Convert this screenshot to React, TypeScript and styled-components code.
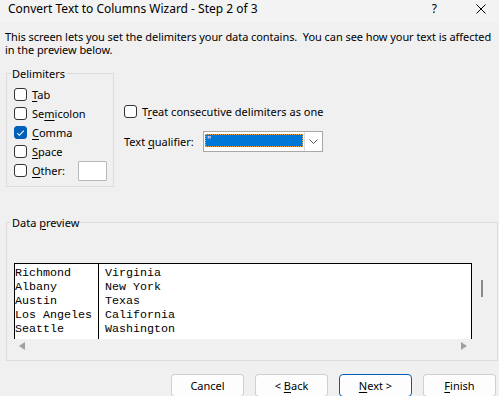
import React from "react";
import styled, { createGlobalStyle } from "styled-components";

const UI_FONT = `"Noto Sans", "Open Sans", sans-serif`;
const MONO_FONT = `"Liberation Mono", "DejaVu Sans Mono", monospace`;

const GlobalStyle = createGlobalStyle`
  html, body { margin: 0; padding: 0; background: #f0f0f0; }
  body { font-family: ${UI_FONT}; font-size: 11px; color: #000; }
  * { box-sizing: border-box; }
`;

const Window = styled.div`
  width: 499px;
  height: 396px;
  overflow: hidden;
  background: #f0f0f0;
  display: flex;
  flex-direction: column;
  font-family: ${UI_FONT};
  font-size: 11px;
  color: #000;
`;

const TitleBar = styled.div`
  height: 22px;
  flex: none;
  background: #f3f3f3;
  display: flex;
  align-items: flex-start;
  padding: 1px 0 0 8px;
`;

const Title = styled.div`
  font-size: 12px;
  line-height: 15px;
  flex: 1;
  white-space: nowrap;
`;

const HelpMark = styled.div`
  font-size: 12px;
  line-height: 15px;
  margin-right: 39px;
`;

const CloseIcon = styled.svg`
  margin: 3px 13px 0 0;
  flex: none;
`;

const Content = styled.div`
  display: flex;
  flex-direction: column;
  padding: 0 1px 0 6px;
`;

const Description = styled.p`
  margin: 8px 0 0 -1px;
  line-height: 13px;
  letter-spacing: -0.06px;
  display: flex;
  flex-direction: column;
`;

const Line = styled.span`
  white-space: pre;
  height: 13px;
`;

const TopRow = styled.div`
  display: flex;
  align-items: flex-start;
  gap: 10px;
  margin-top: 17px;
`;

const GroupBox = styled.div<{ $width?: number }>`
  border: 1px solid #dcdcdc;
  width: ${(p) => (p.$width ? `${p.$width}px` : "auto")};
  display: flex;
  flex-direction: column;
`;

const Caption = styled.div`
  width: fit-content;
  margin: -8px 0 0 4px;
  padding: 0 1px;
  background: #f0f0f0;
  line-height: 15px;
  font-size: 11px;
`;

const DelimList = styled.div`
  display: flex;
  flex-direction: column;
  padding: 4px 6px 6px 7px;
`;

const CheckRow = styled.label`
  display: flex;
  align-items: center;
  gap: 5px;
  height: 19px;
  line-height: 15px;
  white-space: nowrap;
`;

const Box = styled.span<{ $checked?: boolean }>`
  width: 13px;
  height: 13px;
  flex: none;
  border-radius: 3px;
  border: 1px solid ${(p) => (p.$checked ? "#005fb8" : "#333333")};
  background: ${(p) => (p.$checked ? "#005fb8" : "#ffffff")};
  display: flex;
  align-items: center;
  justify-content: center;
`;

const Key = styled.u`
  text-decoration-thickness: 1px;
  text-underline-offset: 2px;
`;

const OtherInput = styled.span`
  margin-left: auto;
  width: 29px;
  height: 20px;
  background: #ffffff;
  border: 1px solid #b9b9b9;
  border-radius: 1px;
`;

const Options = styled.div`
  display: flex;
  flex-direction: column;
  padding-top: 29px;
  gap: 10px;
`;

const QualifierRow = styled.div`
  display: flex;
  align-items: center;
  height: 21px;
`;

const QualifierLabel = styled.span`
  width: 79px;
  flex: none;
  white-space: nowrap;
`;

const Select = styled.div`
  width: 120px;
  height: 21px;
  display: flex;
  align-items: stretch;
  background: #ffffff;
  border: 1px solid #a8a8a8;
`;

const SelectValue = styled.div`
  flex: 1;
  margin: 2px 1px 4px 1px;
  background: #0078d7;
  border: 1px dotted #f2a33a;
  color: #ffffff;
  font-size: 10px;
  line-height: 10px;
  height: 13px;
  padding-left: 1px;
`;

const DropButton = styled.div`
  width: 18px;
  flex: none;
  background: #ffffff;
  border-left: 1px solid #dadada;
  display: flex;
  align-items: center;
  justify-content: center;
`;

const PreviewGroup = styled(GroupBox)`
  margin-top: 35px;
`;

const PreviewInner = styled.div`
  padding: 33px 6px 7px 7px;
`;

const Scroller = styled.div`
  display: grid;
  grid-template-columns: 458px 18px;
  grid-template-rows: 76px 14px;
`;

const DataArea = styled.div`
  background: #ffffff;
  border: 1px solid #000000;
  border-bottom: none;
  display: flex;
  overflow: hidden;
  font-family: ${MONO_FONT};
  font-size: 11.67px;
  line-height: 14px;
`;

const DataColumn = styled.div<{ $width?: number; $divider?: boolean }>`
  display: flex;
  flex-direction: column;
  padding: 2px 0 0 ${(p) => (p.$divider ? 0 : 6)}px;
  width: ${(p) => (p.$width ? `${p.$width}px` : "auto")};
  flex: ${(p) => (p.$width ? "none" : "1")};
  border-right: ${(p) => (p.$divider ? "1px solid #000" : "none")};
  white-space: pre;
`;

const VScroll = styled.div`
  display: block;
  overflow: hidden;
`;

const VThumb = styled.div`
  display: block;
  width: 2px;
  height: 17px;
  margin: 17px 0 0 9px;
  background: #8a8a8a;
`;

const HScroll = styled.div`
  display: flex;
  align-items: center;
  justify-content: space-between;
  padding: 0 5px;
`;

const Corner = styled.div``;

const ButtonRow = styled.div`
  display: flex;
  justify-content: flex-end;
  gap: 11px;
  padding: 13px 3px 0 0;
`;

const Button = styled.button<{ $primary?: boolean }>`
  width: 73px;
  height: 23px;
  flex: none;
  padding: 0;
  font-family: ${UI_FONT};
  font-size: 11px;
  color: #000;
  background: #fdfdfd;
  border: 1px solid ${(p) => (p.$primary ? "#005fb8" : "#d0d0d0")};
  border-bottom-color: ${(p) => (p.$primary ? "#005fb8" : "#bdbdbd")};
  border-radius: 4px;
  line-height: 15px;
`;

const CheckMark = () => (
  <svg width="9" height="8" viewBox="0 0 9 8">
    <path d="M1.2 4.2 L3.4 6.3 L7.8 1.6" fill="none" stroke="#fff" strokeWidth="1.1" />
  </svg>
);

const Check: React.FC<{ checked?: boolean }> = ({ checked }) => (
  <Box $checked={checked}>{checked && <CheckMark />}</Box>
);

const cities = ["Richmond", "Albany", "Austin", "Los Angeles", "Seattle"];
const states = ["Virginia", "New York", "Texas", "California", "Washington"];

export default function App() {
  return (
    <Window>
      <GlobalStyle />
      <TitleBar>
        <Title>Convert Text to Columns Wizard - Step 2 of 3</Title>
        <HelpMark>?</HelpMark>
        <CloseIcon width="10" height="10" viewBox="0 0 10 10">
          <path d="M0.5 0.5 L9.5 9.5 M9.5 0.5 L0.5 9.5" stroke="#000" strokeWidth="1" fill="none" />
        </CloseIcon>
      </TitleBar>
      <Content>
        <Description>
          <Line>This screen lets you set the delimiters your data contains.  You can see how your text is affected</Line>
          <Line>in the preview below.</Line>
        </Description>
        <TopRow>
          <GroupBox $width={108}>
            <Caption>Delimiters</Caption>
            <DelimList>
              <CheckRow>
                <Check />
                <span><Key>T</Key>ab</span>
              </CheckRow>
              <CheckRow>
                <Check />
                <span>Se<Key>m</Key>icolon</span>
              </CheckRow>
              <CheckRow>
                <Check checked />
                <span><Key>C</Key>omma</span>
              </CheckRow>
              <CheckRow>
                <Check />
                <span><Key>S</Key>pace</span>
              </CheckRow>
              <CheckRow>
                <Check />
                <span><Key>O</Key>ther:</span>
                <OtherInput />
              </CheckRow>
            </DelimList>
          </GroupBox>
          <Options>
            <CheckRow>
              <Check />
              <span>T<Key>r</Key>eat consecutive delimiters as one</span>
            </CheckRow>
            <QualifierRow>
              <QualifierLabel>Text <Key>q</Key>ualifier:</QualifierLabel>
              <Select>
                <SelectValue>"</SelectValue>
                <DropButton>
                  <svg width="9" height="5" viewBox="0 0 9 5">
                    <path d="M0.5 0.5 L4.5 4.5 L8.5 0.5" fill="none" stroke="#5a5a5a" strokeWidth="1" />
                  </svg>
                </DropButton>
              </Select>
            </QualifierRow>
          </Options>
        </TopRow>
        <PreviewGroup>
          <Caption>Data <Key>p</Key>review</Caption>
          <PreviewInner>
            <Scroller>
              <DataArea>
                <DataColumn $width={84} $divider>
                  {cities.map((c) => (
                    <span key={c}>{c}</span>
                  ))}
                </DataColumn>
                <DataColumn>
                  {states.map((s) => (
                    <span key={s}>{s}</span>
                  ))}
                </DataColumn>
              </DataArea>
              <VScroll>
                <VThumb />
              </VScroll>
              <HScroll>
                <svg width="6" height="8" viewBox="0 0 6 8">
                  <polygon points="6,0 6,8 0,4" fill="#a0a0a0" />
                </svg>
                <svg width="6" height="8" viewBox="0 0 6 8">
                  <polygon points="0,0 0,8 6,4" fill="#a0a0a0" />
                </svg>
              </HScroll>
              <Corner />
            </Scroller>
          </PreviewInner>
        </PreviewGroup>
      </Content>
      <ButtonRow>
        <Button>Cancel</Button>
        <Button>&lt; <Key>B</Key>ack</Button>
        <Button $primary><Key>N</Key>ext &gt;</Button>
        <Button><Key>F</Key>inish</Button>
      </ButtonRow>
    </Window>
  );
}
